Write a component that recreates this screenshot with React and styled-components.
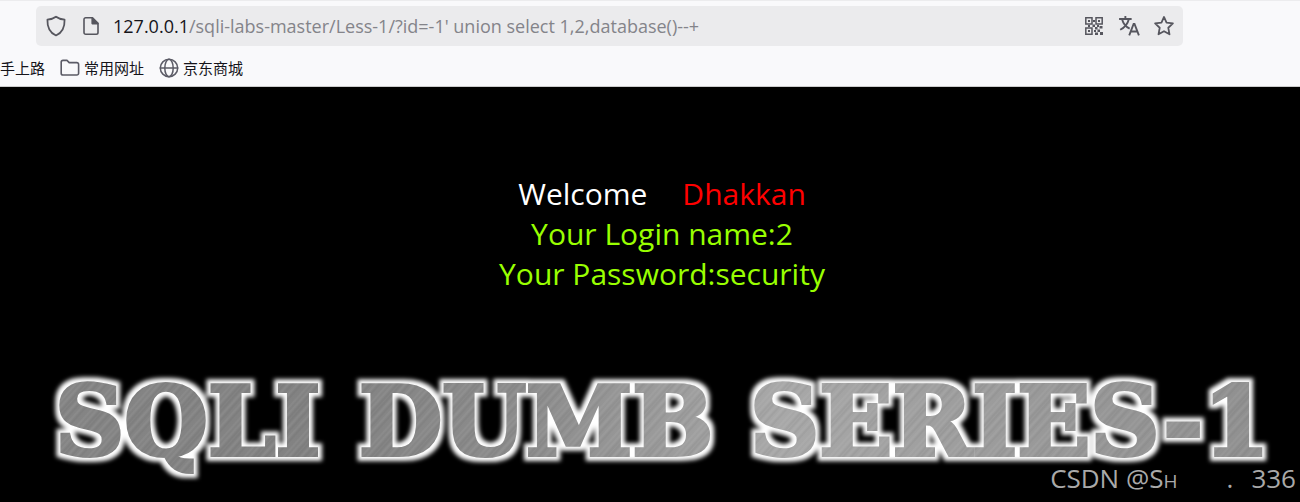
import React from "react";
import styled, { createGlobalStyle } from "styled-components";

const GlobalStyle = createGlobalStyle`
  * {
    box-sizing: border-box;
  }

  body {
    margin: 0;
    background: #000;
    font-family: "Open Sans", "Noto Sans CJK SC", sans-serif;
  }
`;

const Page = styled.div`
  display: flex;
  flex-direction: column;
  min-height: 100vh;
`;

const Chrome = styled.header`
  background: #f9f9fb;
  border-top: 1px solid #ececee;
  border-bottom: 1px solid #cccccc;
`;

const AddressBar = styled.form`
  display: flex;
  align-items: center;
  height: 40px;
  margin: 5px 117px 0 36px;
  padding: 0 8px 0 9px;
  background: #ebebed;
  border-radius: 5px;
`;

const IconButton = styled.button`
  display: flex;
  padding: 0;
  margin-right: ${(props) => props.$gap || 0}px;
  border: none;
  background: none;
  color: #56565e;
  cursor: pointer;
`;

const Host = styled.label`
  font-size: 18px;
  line-height: 24px;
  color: #15141a;
`;

const UrlInput = styled.input`
  flex: 1;
  min-width: 0;
  padding: 0;
  border: none;
  outline: none;
  background: none;
  font-family: inherit;
  font-size: 18px;
  line-height: 24px;
  color: #84848a;
`;

const Bookmarks = styled.nav`
  display: flex;
  align-items: center;
  gap: 15px;
  height: 40px;
  padding-top: 4px;
`;

const Bookmark = styled.a`
  display: flex;
  align-items: center;
  gap: 4px;
  font-family: "Noto Sans CJK SC", sans-serif;
  font-size: 15px;
  line-height: 24px;
  color: #15141a;
  text-decoration: none;

  svg {
    color: #5b5b66;
  }
`;

const Main = styled.main`
  flex: 1;
  display: flex;
  flex-direction: column;
  background: #000;
`;

const Message = styled.div`
  padding: 87px 0 0 24px;
  font-size: 30px;
  line-height: 40px;
  text-align: center;
  color: #99ff00;
`;

const Line = styled.p`
  margin: 0;
`;

const Welcome = styled.span`
  margin-right: 35px;
  color: #fff;
`;

const Name = styled.span`
  color: #ff0000;
`;

const Banner = styled.svg`
  display: block;
  width: 100%;
  margin-top: 71px;
  overflow: visible;
`;

const BannerText = styled.text`
  font-family: "DejaVu Serif", serif;
  font-weight: bold;
  font-size: 96px;
  fill: url(#steel);
  stroke: url(#steel);
  stroke-width: 4px;
`;

const Watermark = styled.footer`
  position: absolute;
  right: 4px;
  bottom: 4px;
  display: flex;
  align-items: baseline;
  font-size: 26px;
  line-height: 34px;
  color: #a9a9a9;
`;

const SmallCap = styled.span`
  font-size: 19px;
  margin-right: 49px;
`;

const Dot = styled.span`
  margin-right: 18px;
`;

const Icon = ({ size = 20, children, ...rest }) => (
  <svg
    width={size}
    height={size}
    viewBox="0 0 20 20"
    fill="none"
    stroke="currentColor"
    strokeWidth="1.6"
    strokeLinejoin="round"
    strokeLinecap="round"
    aria-hidden="true"
    {...rest}
  >
    {children}
  </svg>
);

const ShieldIcon = () => (
  <Icon size={22}>
    <path d="M10 1.6 C8 3.1 5 4 2.2 4.3 C2 10.5 4.4 16.2 10 18.6 C15.6 16.2 18 10.5 17.8 4.3 C15 4 12 3.1 10 1.6 Z" />
  </Icon>
);

const PageIcon = () => (
  <Icon>
    <path d="M4.5 1.8 H11.5 L17 7.2 V16.5 A1.7 1.7 0 0 1 15.3 18.2 H4.7 A1.7 1.7 0 0 1 3 16.5 V3.5 A1.7 1.7 0 0 1 4.7 1.8 Z" />
    <path d="M11.2 2 V7.6 H16.8 Z" fill="currentColor" />
  </Icon>
);

const QrIcon = () => (
  <Icon strokeWidth="1.5" strokeLinejoin="miter">
    <path d="M1.8 1.8 H8 V8 H1.8 Z M12 1.8 H18.2 V8 H12 Z M1.8 12 H8 V18.2 H1.8 Z" />
    <path
      d="M4 4h2v2H4z M14 4h2v2h-2z M4 14h2v2H4z M9 4h2v2H9z M4 9h2v2H4z M8.5 8.5h2.5v2.5H8.5z M11 11h2.5v2.5H11z M15.5 10h3v2.5h-3z M13.5 13.5h2.5v2.5h-2.5z M16 16h3v3h-3z M10 14h2v2h-2z M11 16.5h3V19h-3z M13 9h2v2h-2z"
      fill="currentColor"
      stroke="none"
    />
  </Icon>
);

const TranslateIcon = () => (
  <Icon size={22} strokeLinecap="butt" strokeLinejoin="miter" strokeWidth="1.7">
    <path d="M1 3.6 H12.4 M6.7 1 V3.6 M3.7 3.8 C4.8 8 7.4 10.8 10.6 12.4 M9.8 3.8 C8.8 8.2 5.8 11.4 2 13.4" />
    <path d="M10.2 18.6 L14.2 8.2 H15 L19 18.6 M11.6 15 H17.6" />
  </Icon>
);

const StarIcon = () => (
  <Icon size={22}>
    <path d="M10 1.8 L12.3 6.9 L18.1 7.7 L13.9 11.6 L15 17.6 L10 14.7 L5 17.6 L6.1 11.6 L1.9 7.7 L7.7 6.9 Z" />
  </Icon>
);

const FolderIcon = () => (
  <Icon>
    <path d="M1.2 4.2 A1.8 1.8 0 0 1 3 2.4 H7 L9.2 4.6 H16.8 A1.8 1.8 0 0 1 18.6 6.4 V15.2 A1.8 1.8 0 0 1 16.8 17 H3 A1.8 1.8 0 0 1 1.2 15.2 Z" />
  </Icon>
);

const GlobeIcon = () => (
  <Icon strokeWidth="1.5">
    <circle cx="10" cy="10" r="8.7" />
    <ellipse cx="10" cy="10" rx="4.2" ry="8.7" />
    <path d="M1.3 10 H18.7" />
  </Icon>
);

const SeriesBanner = () => (
  <Banner viewBox="0 0 1300 120" role="img" aria-label="SQLI DUMB SERIES-1">
    <defs>
      <linearGradient id="sheen" x1="0" y1="0" x2="1" y2="0">
        <stop offset="0" stopColor="#858585" />
        <stop offset="0.25" stopColor="#828282" />
        <stop offset="0.42" stopColor="#8e8e8e" />
        <stop offset="0.6" stopColor="#a8a8a8" />
        <stop offset="0.8" stopColor="#999999" />
        <stop offset="1" stopColor="#8e8e8e" />
      </linearGradient>
      <pattern id="scratches" width="29" height="200" patternUnits="userSpaceOnUse" patternTransform="rotate(42)">
        <path d="M2 0V200 M11 0V200 M15 0V200 M24 0V200" stroke="#fff" strokeOpacity="0.09" />
        <path d="M5 0V200 M18 0V200 M21 0V200 M27 0V200" stroke="#000" strokeOpacity="0.07" />
      </pattern>
      <pattern id="steel" width="1300" height="120" patternUnits="userSpaceOnUse">
        <rect width="1300" height="120" fill="url(#sheen)" />
        <rect width="1300" height="120" fill="url(#scratches)" />
      </pattern>
      <filter id="glow" x="0" y="0" width="1300" height="120" filterUnits="userSpaceOnUse" colorInterpolationFilters="sRGB">
        <feMorphology in="SourceAlpha" operator="dilate" radius="4" result="wide" />
        <feGaussianBlur in="wide" stdDeviation="2" result="soft" />
        <feFlood floodColor="#fff" />
        <feComposite in2="soft" operator="in" result="halo" />
        <feMerge>
          <feMergeNode in="halo" />
          <feMergeNode in="SourceGraphic" />
        </feMerge>
      </filter>
    </defs>
    <g filter="url(#glow)">
      <BannerText x="55" y="90">SQLI</BannerText>
      <BannerText x="359" y="90">DUMB</BannerText>
      <BannerText x="750" y="90">SERIES-1</BannerText>
    </g>
  </Banner>
);

const App = () => {
  return (
    <Page>
      <GlobalStyle />
      <Chrome>
        <AddressBar onSubmit={(e) => e.preventDefault()}>
          <IconButton type="button" aria-label="Tracking protection" $gap={14}>
            <ShieldIcon />
          </IconButton>
          <IconButton type="button" aria-label="Site information" $gap={12}>
            <PageIcon />
          </IconButton>
          <Host htmlFor="url">127.0.0.1</Host>
          <UrlInput
            id="url"
            type="text"
            spellCheck="false"
            defaultValue="/sqli-labs-master/Less-1/?id=-1' union select 1,2,database()--+"
          />
          <IconButton type="button" aria-label="QR code" $gap={14}>
            <QrIcon />
          </IconButton>
          <IconButton type="button" aria-label="Translate" $gap={13}>
            <TranslateIcon />
          </IconButton>
          <IconButton type="button" aria-label="Bookmark">
            <StarIcon />
          </IconButton>
        </AddressBar>
        <Bookmarks>
          <Bookmark href="#">手上路</Bookmark>
          <Bookmark href="#">
            <FolderIcon />
            常用网址
          </Bookmark>
          <Bookmark href="#">
            <GlobeIcon />
            京东商城
          </Bookmark>
        </Bookmarks>
      </Chrome>
      <Main>
        <Message>
          <Line>
            <Welcome>Welcome</Welcome>
            <Name>Dhakkan</Name>
          </Line>
          <Line>Your Login name:2</Line>
          <Line>Your Password:security</Line>
        </Message>
        <SeriesBanner />
      </Main>
      <Watermark>
        <span>CSDN @S</span>
        <SmallCap>H</SmallCap>
        <Dot>.</Dot>
        <span>336</span>
      </Watermark>
    </Page>
  );
};

export default App;
